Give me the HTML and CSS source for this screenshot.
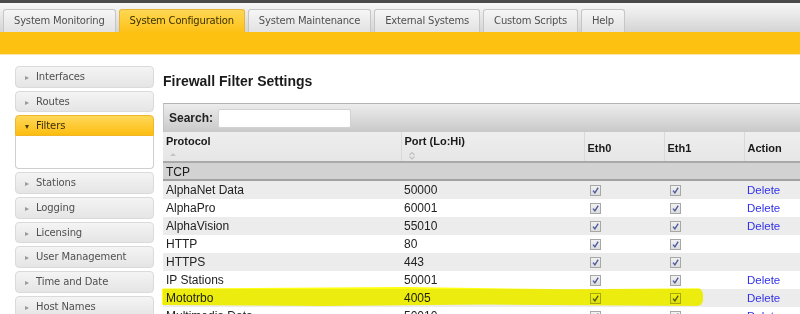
FILE: index.html
```html
<!DOCTYPE html>
<html lang="en">
<head>
    <meta charset="UTF-8">
    <title>Firewall Filter Settings</title>
    <link rel="stylesheet" href="styles.css">
</head>
<body>
    <header class="topbar">
        <nav class="tabs">
            <a class="tab">System Monitoring</a>
            <a class="tab active">System Configuration</a>
            <a class="tab">System Maintenance</a>
            <a class="tab">External Systems</a>
            <a class="tab">Custom Scripts</a>
            <a class="tab">Help</a>
        </nav>
    </header>
    <div class="subbar"></div>

    <div class="page">
        <!-- accordion menu -->
        <aside class="menu">
            <div class="menu-item"><span class="arrow">&#9656;</span>Interfaces</div>
            <div class="menu-item"><span class="arrow">&#9656;</span>Routes</div>
            <div class="menu-group">
                <div class="menu-item open"><span class="arrow">&#9662;</span>Filters</div>
                <div class="menu-body"></div>
            </div>
            <div class="menu-item"><span class="arrow">&#9656;</span>Stations</div>
            <div class="menu-item"><span class="arrow">&#9656;</span>Logging</div>
            <div class="menu-item"><span class="arrow">&#9656;</span>Licensing</div>
            <div class="menu-item"><span class="arrow">&#9656;</span>User Management</div>
            <div class="menu-item"><span class="arrow">&#9656;</span>Time and Date</div>
            <div class="menu-item"><span class="arrow">&#9656;</span>Host Names</div>
        </aside>

        <main class="content">
            <h1>Firewall Filter Settings</h1>
            <div class="grid-box">
                <div class="search-bar">
                    <label>Search:</label>
                    <input type="text" class="search-input">
                </div>
                <table class="rules">
                    <colgroup>
                        <col class="c-proto"><col class="c-port"><col class="c-eth"><col class="c-eth"><col class="c-action">
                    </colgroup>
                    <thead>
                        <tr>
                            <th class="sortable">Protocol
                                <svg class="sort" width="8" height="6" viewBox="0 0 8 6"><path d="M1 5 L4 2 L7 5 Z" fill="#c4c4c4"/></svg>
                            </th>
                            <th class="sortable">Port (Lo:Hi)
                                <svg class="sort" width="8" height="9" viewBox="0 0 8 9"><path d="M1.5 4 L4 1.5 L6.5 4 M1.5 5.5 L4 8 L6.5 5.5" fill="none" stroke="#c0c0c0" stroke-width="1.1"/></svg>
                            </th>
                            <th>Eth0</th>
                            <th>Eth1</th>
                            <th>Action</th>
                        </tr>
                    </thead>
                    <tbody id="rows"></tbody>
                </table>
                <div class="marker"></div>
            </div>
        </main>
    </div>

    <script>
        // filter rules
        const rules = [
            { name: 'AlphaNet Data', port: '50000', del: true },
            { name: 'AlphaPro', port: '60001', del: true },
            { name: 'AlphaVision', port: '55010', del: true },
            { name: 'HTTP', port: '80', del: false },
            { name: 'HTTPS', port: '443', del: false },
            { name: 'IP Stations', port: '50001', del: true },
            { name: 'Mototrbo', port: '4005', del: true },
            { name: 'Multimedia Data', port: '50010', del: true }
        ];

        const box = '<span class="check"><svg width="9" height="9" viewBox="0 0 9 9"><path d="M2 4.6 L3.9 6.8 L7.2 1.6" fill="none" stroke="#4b5a9c" stroke-width="1.4"/></svg></span>';

        const tbody = document.getElementById('rows');
        tbody.innerHTML = '<tr class="group"><td colspan="5">TCP</td></tr>';
        rules.forEach((r, i) => {
            const tr = document.createElement('tr');
            tr.className = i % 2 === 0 ? 'odd' : 'even';
            tr.innerHTML = `
                <td>${r.name}</td>
                <td>${r.port}</td>
                <td>${box}</td>
                <td>${box}</td>
                <td>${r.del ? '<a class="del">Delete</a>' : ''}</td>
            `;
            tbody.appendChild(tr);
        });
    </script>
</body>
</html>
```

FILE: styles.css
```css
body {
    margin: 0;
    padding: 0;
    background: #fff;
    font-family: "DejaVu Sans", Verdana, sans-serif;
    overflow: hidden;
    width: 800px;
    height: 314px;
}

.topbar {
    border-top: 3px solid #4a4a4a;
    background: linear-gradient(#f7f7f7, #d4d4d4);
    height: 32px;
    box-sizing: border-box;
    padding-top: 6px;
}

.tabs {
    display: flex;
    gap: 3px;
    padding-left: 3px;
    height: 23px;
}

.tab {
    display: block;
    height: 23px;
    box-sizing: border-box;
    padding: 5px 10px 0;
    font-size: 10px;
    letter-spacing: -0.2px;
    color: #505050;
    background: linear-gradient(#f6f6f6, #e2e2e2);
    border: 1px solid #c6c6c6;
    border-bottom: none;
    border-radius: 3px 3px 0 0;
    white-space: nowrap;
}

.tab.active {
    background: linear-gradient(#ffd855, #fdc116);
    border-color: #e8b53a;
    color: #3a3000;
}

.subbar {
    height: 22px;
    background: #fdc112;
    border-bottom: 1px solid #fde9b0;
}

.page {
    display: flex;
    gap: 9px;
    padding: 11px 0 0 15px;
}

.menu {
    width: 139px;
    flex: none;
    display: flex;
    flex-direction: column;
    gap: 3px;
}

.menu-item {
    height: 21.7px;
    box-sizing: border-box;
    padding: 4px 0 0 9px;
    font-size: 10px;
    letter-spacing: -0.1px;
    color: #505050;
    background: linear-gradient(#f4f4f4, #e5e5e5);
    border: 1px solid #dadada;
    border-radius: 4px;
}

.arrow {
    display: inline-block;
    width: 11px;
    font-size: 8px;
    color: #999;
}

.menu-group {
    display: flex;
    flex-direction: column;
}

.menu-item.open {
    background: linear-gradient(#ffd85a, #fcbd10);
    border-color: #efb62a;
    border-radius: 4px 4px 0 0;
    color: #3a2e00;
    height: 21px;
}

.menu-item.open .arrow {
    color: #4a3a00;
}

.menu-body {
    height: 32px;
    border: 1px solid #cfcfcf;
    border-top: none;
    border-radius: 0 0 4px 4px;
    background: #fff;
}

.content {
    flex: 1;
    min-width: 0;
}

.content h1 {
    font-family: "Liberation Sans", Arial, sans-serif;
    font-size: 14px;
    font-weight: bold;
    color: #1a1a1a;
    margin: 6px 0 0;
    height: 31px;
    line-height: 18px;
}

.grid-box {
    position: relative;
    width: 700px;
    font-family: "Liberation Sans", Arial, sans-serif;
    font-size: 12px;
    color: #222;
}

.search-bar {
    height: 29px;
    box-sizing: border-box;
    border-top: 1px solid #b3b3b3;
    border-left: 1px solid #c4c4c4;
    background: linear-gradient(#ececec, #c9c9c9);
    display: flex;
    align-items: center;
    gap: 5px;
    padding-left: 5px;
}

.search-bar label {
    font-weight: bold;
    font-size: 12px;
    color: #222;
}

.search-input {
    width: 133px;
    height: 19px;
    box-sizing: border-box;
    border: 1px solid #d2d2d2;
    border-radius: 2px;
    background: #fff;
    margin: 0;
}

.rules {
    border-collapse: collapse;
    table-layout: fixed;
    width: 700px;
}

.c-proto { width: 238px; }
.c-port { width: 183px; }
.c-eth { width: 80px; }
.c-action { width: 119px; }

.rules th {
    height: 30px;
    box-sizing: border-box;
    text-align: left;
    font-weight: bold;
    font-size: 11px;
    color: #1a1a1a;
    padding: 3px 3px 0;
    background: linear-gradient(#eeeeee, #e6e6e6);
    border-left: 1px solid #d9d9d9;
    border-bottom: 2px solid #a9a9a9;
    vertical-align: middle;
}

.rules th:first-child {
    border-left: none;
}

.rules th.sortable {
    vertical-align: top;
    padding-top: 3px;
}

.sort {
    display: block;
    margin: 4px 0 0 3px;
}

.rules td {
    height: 18px;
    padding: 0 3px;
    white-space: nowrap;
    overflow: hidden;
}

.group td {
    height: 15px;
    background: #d2d2d2;
    border-bottom: 2px solid #a2a2a2;
    color: #1a1a1a;
    padding-top: 1px;
}

.odd td {
    background: #ececec;
}

.even td {
    background: #fff;
}

.check {
    display: inline-block;
    vertical-align: middle;
    margin-left: 3px;
    width: 11px;
    height: 11px;
    box-sizing: border-box;
    border: 1px solid #a7a7a7;
    background: linear-gradient(#f2f2f2, #dcdcdc);
    position: relative;
}

.check svg {
    position: absolute;
    left: 0;
    top: 0;
}

.del {
    color: #3131e8;
    font-size: 11.5px;
    cursor: pointer;
}

/* highlighter stroke over the Mototrbo row */
.marker {
    position: absolute;
    left: -1px;
    top: 184px;
    width: 541px;
    height: 19px;
    background: #ffff10;
    mix-blend-mode: multiply;
    border-radius: 3px 8px 6px 2px;
    clip-path: polygon(0 8%, 45% 0, 75% 12%, 100% 6%, 100% 100%, 60% 92%, 30% 100%, 0 95%);
    pointer-events: none;
}
```
